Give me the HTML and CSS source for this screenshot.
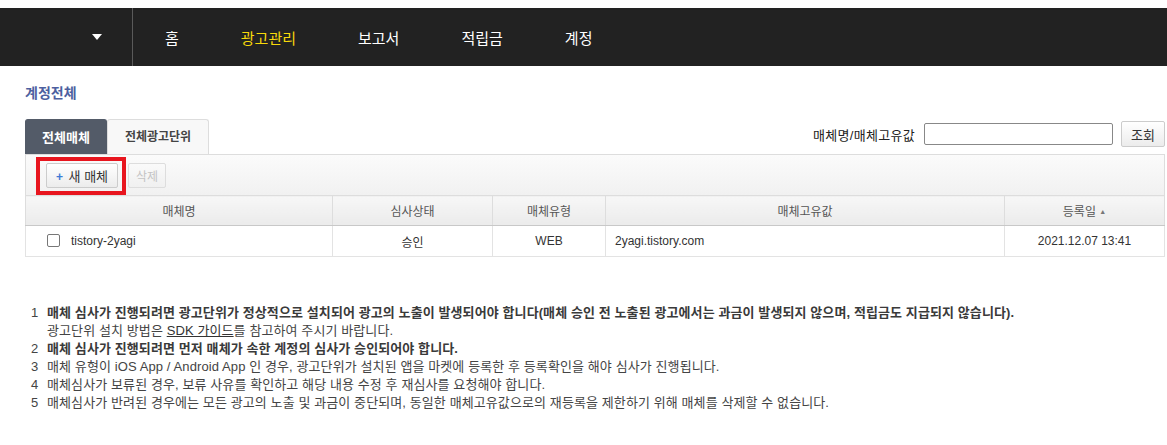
FILE: index.html
```html
<!DOCTYPE html>
<html lang="ko">
<head>
    <meta charset="UTF-8">
    <title>매체 관리</title>
    <link rel="stylesheet" href="styles.css">
</head>
<body>
    <header class="gnb">
        <div class="gnb-side">
            <span class="gnb-arrow"></span>
        </div>
        <ul class="gnb-menu">
            <li><a href="#">홈</a></li>
            <li class="on"><a href="#">광고관리</a></li>
            <li><a href="#">보고서</a></li>
            <li><a href="#">적립금</a></li>
            <li><a href="#">계정</a></li>
        </ul>
    </header>

    <div class="content">
        <h2 class="page-title">계정전체</h2>

        <div class="tab-row">
            <ul class="tabs">
                <li class="on">전체매체</li>
                <li>전체광고단위</li>
            </ul>
            <div class="search">
                <label for="keyword">매체명/매체고유값</label>
                <input type="text" id="keyword">
                <button class="btn">조회</button>
            </div>
        </div>

        <div class="toolbar">
            <button class="btn btn-add"><span class="plus">+</span> 새 매체</button>
            <button class="btn" disabled>삭제</button>
            <span class="highlight"></span>
        </div>

        <table class="list">
            <colgroup>
                <col style="width: 307px">
                <col style="width: 160px">
                <col style="width: 113px">
                <col style="width: 399px">
                <col>
            </colgroup>
            <thead>
                <tr>
                    <th>매체명</th>
                    <th>심사상태</th>
                    <th>매체유형</th>
                    <th>매체고유값</th>
                    <th>등록일 <span class="sort">▲</span></th>
                </tr>
            </thead>
            <tbody>
                <tr>
                    <td class="name"><span class="check"></span>tistory-2yagi</td>
                    <td class="center">승인</td>
                    <td class="center">WEB</td>
                    <td>2yagi.tistory.com</td>
                    <td class="center">2021.12.07 13:41</td>
                </tr>
            </tbody>
        </table>

        <ol class="notes">
            <li><span class="num">1</span><div><b>매체 심사가 진행되려면 광고단위가 정상적으로 설치되어 광고의 노출이 발생되어야 합니다(매체 승인 전 노출된 광고에서는 과금이 발생되지 않으며, 적립금도 지급되지 않습니다).</b><br>광고단위 설치 방법은 <a href="#">SDK 가이드</a>를 참고하여 주시기 바랍니다.</div></li>
            <li><span class="num">2</span><div><b>매체 심사가 진행되려면 먼저 매체가 속한 계정의 심사가 승인되어야 합니다.</b></div></li>
            <li><span class="num">3</span><div>매체 유형이 iOS App / Android App 인 경우, 광고단위가 설치된 앱을 마켓에 등록한 후 등록확인을 해야 심사가 진행됩니다.</div></li>
            <li><span class="num">4</span><div>매체심사가 보류된 경우, 보류 사유를 확인하고 해당 내용 수정 후 재심사를 요청해야 합니다.</div></li>
            <li><span class="num">5</span><div>매체심사가 반려된 경우에는 모든 광고의 노출 및 과금이 중단되며, 동일한 매체고유값으로의 재등록을 제한하기 위해 매체를 삭제할 수 없습니다.</div></li>
        </ol>
    </div>
</body>
</html>
```

FILE: styles.css
```css
* {
    margin: 0;
    padding: 0;
    box-sizing: border-box;
}

body {
    font-family: 'Liberation Sans', 'Noto Sans CJK KR', sans-serif;
    font-size: 12px;
    color: #333;
    background: #fff;
}

ul, ol {
    list-style: none;
}

/* 상단 메뉴 */
.gnb {
    display: flex;
    margin-top: 8px;
    height: 58px;
    background-color: #222;
}

.gnb-side {
    width: 133px;
    border-right: 1px solid #5a5a5a;
    display: flex;
    align-items: center;
    justify-content: flex-end;
    padding-right: 30px;
}

.gnb-arrow {
    width: 0;
    height: 0;
    border-left: 5px solid transparent;
    border-right: 5px solid transparent;
    border-top: 6px solid #fff;
    margin-top: -1px;
}

.gnb-menu {
    display: flex;
    align-items: center;
    padding-left: 1px;
}

.gnb-menu li a {
    display: block;
    padding: 0 31px;
    font-size: 15px;
    color: #fff;
    text-decoration: none;
}

.gnb-menu li.on a {
    color: #f7d90a;
}

/* 본문 */
.content {
    padding: 0 2px 0 25px;
}

.page-title {
    margin-top: 16px;
    height: 22px;
    line-height: 22px;
    font-size: 14px;
    font-weight: bold;
    color: #4d5fa0;
}

.tab-row {
    display: flex;
    justify-content: space-between;
    align-items: flex-start;
    margin-top: 15px;
}

.tabs {
    display: flex;
}

.tabs li {
    height: 35px;
    line-height: 35px;
    text-align: center;
    font-weight: bold;
    border: 1px solid #ddd;
    border-bottom: 0;
    border-radius: 3px 3px 0 0;
    background-color: #f8f8f8;
    color: #444;
    width: 102px;
}

.tabs li.on {
    width: 82px;
    font-size: 13px;
    background-color: #535b68;
    border-color: #535b68;
    color: #fff;
}

.search {
    display: flex;
    align-items: center;
    margin-top: 2px;
}

.search label {
    margin-right: 9px;
    font-size: 13px;
    letter-spacing: 0.3px;
    color: #222;
}

.search input {
    width: 189px;
    height: 22px;
    border: 1px solid #888;
    border-radius: 2px;
    margin-right: 8px;
}

.btn {
    font-family: inherit;
    font-size: 12px;
    color: #333;
    height: 25px;
    padding: 0 10px;
    border: 1px solid #ccc;
    border-radius: 2px;
    background: linear-gradient(#fff, #ececec);
}

.search .btn {
    height: 26px;
    width: 44px;
    padding: 0;
    font-size: 13px;
}

.btn:disabled {
    color: #c4c4c4;
    border-color: #ddd;
    background: linear-gradient(#fafafa, #f0f0f0);
}

/* 툴바 */
.toolbar {
    position: relative;
    display: flex;
    align-items: center;
    gap: 10px;
    height: 41px;
    padding-left: 20px;
    border: 1px solid #ddd;
    border-bottom: 0;
    background: linear-gradient(#fbfbfb, #f1f1f1);
}

.btn-add {
    width: 72px;
    padding: 0;
    font-size: 13px;
}

.btn-add .plus {
    color: #3d7ad6;
    font-weight: bold;
    font-size: 12px;
    margin-right: 2px;
}

.toolbar .btn:disabled {
    width: 38px;
    padding: 0;
}

/* 강조 표시 */
.highlight {
    position: absolute;
    left: 10px;
    top: 2px;
    width: 90px;
    height: 38px;
    border: 4px solid #e8151e;
}

/* 목록 */
.list {
    width: 100%;
    border-collapse: collapse;
    table-layout: fixed;
    border: 1px solid #ddd;
}

.list th {
    height: 30px;
    font-weight: normal;
    color: #555;
    background: linear-gradient(#f7f7f7, #ebebeb);
    border: 1px solid #ddd;
    border-bottom: 1px solid #c8c8c8;
}

.list th .sort {
    font-size: 7px;
    color: #777;
    vertical-align: 2px;
}

.list td {
    height: 31px;
    padding: 0 9px;
    border: 1px solid #e3e3e3;
    color: #333;
}

.list td.center {
    text-align: center;
}

.list td.name {
    padding-left: 21px;
}

.check {
    display: inline-block;
    width: 13px;
    height: 13px;
    border: 1px solid #777;
    border-radius: 2px;
    vertical-align: -2px;
    margin-right: 11px;
}

/* 안내 문구 */
.notes {
    margin-top: 47px;
    font-size: 13px;
    line-height: 18px;
    letter-spacing: 0.1px;
    color: #444;
}

.notes li {
    display: flex;
}

.notes .num {
    width: 22px;
    padding-left: 6px;
}

.notes b {
    color: #3a3a3a;
}

.notes a {
    color: #333;
    text-decoration: underline;
}
```
